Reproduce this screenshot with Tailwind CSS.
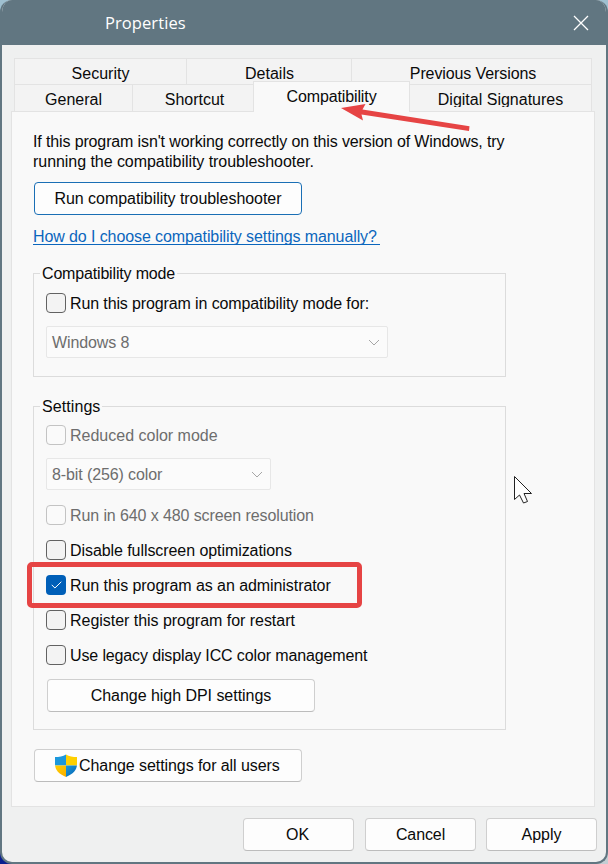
<!DOCTYPE html>
<html lang="en">
<head>
<meta charset="utf-8">
<title>Properties</title>
<script src="https://cdn.jsdelivr.net/npm/@tailwindcss/browser@4"></script>
</head>
<body class="h-[864px] w-[608px] overflow-hidden bg-linear-to-b from-[#9fc0d0] from-50% to-[#c3ced3] to-50% font-['Liberation_Sans',Arial,sans-serif] text-[16px] leading-5 text-[#0a0a0a]">
<div class="h-[864px] w-[608px] bg-[linear-gradient(90deg,#0a1f8f_20px,transparent_20px)] bg-[length:100%_20px] bg-bottom bg-no-repeat">
<main class="relative flex h-[864px] flex-col overflow-hidden rounded-[12px] border-2 border-t-0 border-[#617681] bg-[#eff0f0]">
  <header class="flex h-[45px] shrink-0 items-center justify-between bg-[#617681] pr-[17px] pl-[103px] text-white">
    <h1 class="font-['Open_Sans','Noto_Sans',sans-serif] text-[16.5px] tracking-[0.08px]">Properties</h1>
    <svg class="size-4" viewBox="0 0 16 16" fill="none" stroke="white" stroke-width="1.3"><path d="M1 1 15 15M15 1 1 15"/></svg>
  </header>

  <nav class="mt-[13px] ml-3 w-[578px] shrink-0">
    <div class="flex h-[26px] border border-b-0 border-[#e3e3e3] bg-[#f3f3f3] text-center leading-[29px]">
      <div class="w-[172px] border-r border-[#e3e3e3]"><span>Security</span></div>
      <div class="w-[165px] border-r border-[#e3e3e3] pl-px"><span>Details</span></div>
      <div class="flex-1 pl-[3px]"><span class="tracking-[-0.1px]">Previous Versions</span></div>
    </div>
    <div class="flex h-[27px] border-r border-l border-[#e3e3e3] bg-[#f3f3f3] text-center leading-[30px]">
      <div class="w-[118px] border-t border-r border-[#e3e3e3] leading-[30px]"><span>General</span></div>
      <div class="w-[120px] border-t border-[#e3e3e3] pl-[3px] leading-[30px]"><span>Shortcut</span></div>
      <div class="relative z-10 -mt-[3px] h-[31px] w-[157px] border border-b-0 border-[#e3e3e3] bg-[#f9f9f9] leading-[30px]"><span class="tracking-[-0.12px]">Compatibility</span></div>
      <div class="h-[23px] flex-1 overflow-hidden border-t border-[#e3e3e3] leading-[30px]"><span>Digital Signatures</span></div>
    </div>
  </nav>

  <section class="ml-[9px] flex h-[696px] w-[584px] shrink-0 flex-col items-start border border-[#e3e3e3] bg-[#f9f9f9] pt-5 pl-[21px]">
    <p class="whitespace-nowrap"><span class="tracking-[-0.13px]">If this program isn't working correctly on this version of Windows, try</span><br><span class="tracking-[-0.05px]">running the compatibility troubleshooter.</span></p>
    <button class="mt-[10px] ml-px h-[33px] w-[268px] rounded-[4px] border border-[#1a6fb5] bg-[#fdfdfd]"><span class="tracking-[-0.05px]">Run compatibility troubleshooter</span></button>
    <a class="mt-[12px] h-[18px] border-b border-[#0b66bd] pr-[3px] text-[#0b66bd]"><span class="tracking-[-0.1px]">How do I choose compatibility settings manually?</span></a>

    <div class="mt-[28px] flex h-[104px] w-[473px] flex-col items-start border border-[#dcdcdc] pl-3">
      <h2 class="-mt-[10px] -ml-[6px] bg-[#f9f9f9] px-[2px]"><span class="tracking-[-0.17px]">Compatibility mode</span></h2>
      <div class="mt-[9px] flex h-5 items-center gap-1"><i class="size-5 rounded-[4px] border border-[#626262] bg-[#f3f3f3]"></i><span class="pt-[2px] tracking-[-0.12px]">Run this program in compatibility mode for:</span></div>
      <div class="mt-[13px] flex h-8 w-[342px] items-center justify-between rounded-[2px] border border-[#e7e7e7] bg-[#fbfbfb] pr-[7px] pl-[5px] text-[#6d6d6d]"><span class="pt-[2px] tracking-[-0.1px]">Windows 8</span><svg class="h-[7px] w-3" viewBox="0 0 12 7" fill="none" stroke="#a6a6a6"><path d="M1 1 6 6 11 1"/></svg></div>
    </div>

    <div class="mt-[29px] flex h-[324px] w-[473px] flex-col items-start border border-[#dcdcdc] pl-3">
      <h2 class="-mt-[10px] -ml-[6px] bg-[#f9f9f9] px-[2px]"><span class="tracking-[0.08px]">Settings</span></h2>
      <div class="mt-[8px] flex h-5 items-center gap-1 text-[#6d6d6d]"><i class="size-5 rounded-[4px] border border-[#c3c3c3] bg-[#fafafa]"></i><span class="pt-[2px]">Reduced color mode</span></div>
      <div class="mt-[13px] flex h-8 w-[225px] items-center justify-between rounded-[2px] border border-[#e7e7e7] bg-[#fbfbfb] pr-[7px] pl-[5px] text-[#6d6d6d]"><span class="pt-[2px] tracking-[-0.11px]">8-bit (256) color</span><svg class="h-[7px] w-3" viewBox="0 0 12 7" fill="none" stroke="#a6a6a6"><path d="M1 1 6 6 11 1"/></svg></div>
      <div class="mt-[15px] flex flex-col gap-[15px]">
        <div class="flex h-5 items-center gap-1 text-[#6d6d6d]"><i class="size-5 rounded-[4px] border border-[#c3c3c3] bg-[#fafafa]"></i><span class="pt-[2px] tracking-[-0.1px]">Run in 640 x 480 screen resolution</span></div>
        <div class="flex h-5 items-center gap-1"><i class="size-5 rounded-[4px] border border-[#626262] bg-[#f3f3f3]"></i><span class="pt-[2px] tracking-[-0.07px]">Disable fullscreen optimizations</span></div>
        <div class="flex h-5 items-center gap-1"><i class="flex size-5 items-center justify-center rounded-[4px] bg-[#005fb8]"><svg class="h-2 w-[11px]" viewBox="0 0 11 8" fill="none" stroke="white"><path d="M.7 3.8 3.9 7 10.3.8"/></svg></i><span class="pt-[2px] tracking-[-0.07px]">Run this program as an administrator</span></div>
        <div class="flex h-5 items-center gap-1"><i class="size-5 rounded-[4px] border border-[#626262] bg-[#f3f3f3]"></i><span class="pt-[2px] tracking-[-0.03px]">Register this program for restart</span></div>
        <div class="flex h-5 items-center gap-1"><i class="size-5 rounded-[4px] border border-[#626262] bg-[#f3f3f3]"></i><span class="pt-[2px] tracking-[-0.13px]">Use legacy display ICC color management</span></div>
      </div>
      <button class="mt-[14px] ml-px h-[33px] w-[268px] rounded-[4px] border border-[#cfcfcf] border-b-[#bcbcbc] bg-[#fdfdfd]"><span class="tracking-[-0.04px]">Change high DPI settings</span></button>
    </div>

    <button class="mt-[19px] ml-px flex h-[33px] w-[268px] items-center rounded-[4px] border border-[#cfcfcf] border-b-[#bcbcbc] bg-[#fdfdfd] pl-[20px]">
      <svg class="mr-[2px] h-[23px] w-[22px] shrink-0" viewBox="0 0 22 23">
        <defs>
          <clipPath id="shield"><path d="M11 .5C8 2.500 4 3 0 3V10C0 16 4 20 11 23 18 20 22 16 22 10V3C18 3 14 2.500 11 .5Z"/></clipPath>
          <linearGradient id="blue" x2="1" y2="1"><stop stop-color="#1c98dc"/><stop offset="1" stop-color="#0563b0"/></linearGradient>
          <linearGradient id="gold" x2="1" y2="1"><stop stop-color="#ffd000"/><stop offset="1" stop-color="#f8ad00"/></linearGradient>
        </defs>
        <g clip-path="url(#shield)"><path fill="#1c98dc" d="M0 0h11v11.5H0z"/><path fill="#ffd000" d="M11 0h11v11.5H11z"/><path fill="url(#gold)" d="M0 11.5h11V23H0z"/><path fill="url(#blue)" d="M11 11.5h11V23H11z"/></g>
      </svg>
      <span class="tracking-[-0.07px]">Change settings for all users</span>
    </button>
  </section>

  <footer class="mt-[11px] mr-[9px] flex shrink-0 justify-end gap-[11px]">
    <button class="h-[33px] w-[111px] rounded-[4px] border border-[#cfcfcf] border-b-[#bcbcbc] bg-[#fdfdfd] pr-[2px]">OK</button>
    <button class="h-[33px] w-[111px] rounded-[4px] border border-[#cfcfcf] border-b-[#bcbcbc] bg-[#fdfdfd]"><span class="tracking-[-0.1px]">Cancel</span></button>
    <button class="-ml-px h-[33px] w-[111px] rounded-[4px] border border-[#cfcfcf] border-b-[#bcbcbc] bg-[#fdfdfd]">Apply</button>
  </footer>

  <!-- Annotations and pointer -->
  <div class="pointer-events-none absolute top-[562px] left-[25px] h-[46px] w-[335px] rounded-[5px] border-[5px] border-[#e64444]"></div>
  <svg class="absolute top-[100px] left-[338px] z-20 h-[34px] w-[134px]" viewBox="340 100 134 34"><path fill="#e64444" d="M341 108 365.500 104 362.500 109.500 469.500 126.300 469 131 361.500 114.500 363 120.500Z"/></svg>
  <svg class="absolute top-[475px] left-[512px] h-[30px] w-[20px]" viewBox="514 475 20 30"><path fill="white" stroke="#222" d="M514.500 476.500V499.500L519.500 495 523.500 503 527.500 501.500 524 493.500H531.500Z"/></svg>
</main>
</div>
</body>
</html>
